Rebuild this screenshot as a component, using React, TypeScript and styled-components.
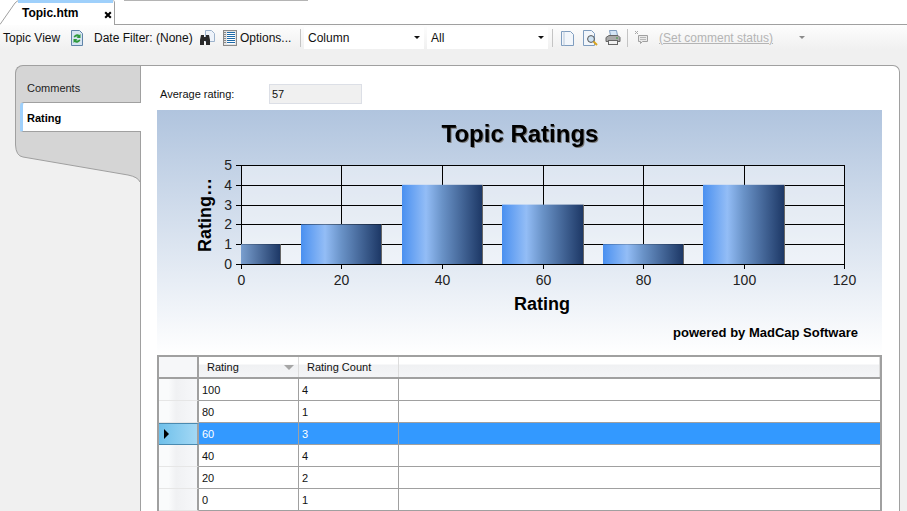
import React from "react";
import styled, { createGlobalStyle } from "styled-components";

const Global = createGlobalStyle`
    html, body {
        margin: 0;
        height: 511px;
        overflow: hidden;
        background: #f0f0f0;
        font-family: "Liberation Sans", Arial, sans-serif;
        font-size: 11px;
        color: #111;
    }
`;

const Page = styled.div`
    width: 907px;
    height: 511px;
    display: flex;
    flex-direction: column;
    overflow: hidden;
`;

const TabStrip = styled.div`
    height: 25px;
    box-sizing: border-box;
    flex: none;
    background: #fff;
    border-bottom: 1px solid #a0a0a0;
    display: flex;
    align-items: flex-start;
`;

const DocTab = styled.div`
    position: relative;
    width: 115px;
    height: 25px;
    box-sizing: border-box;
    display: flex;
    align-items: center;
    justify-content: space-between;
    padding: 0 2px 0 22px;
    font-weight: 700;
    font-size: 12px;
    color: #000;
    background: #fff;
    border-right: 1px solid #a0a0a0;
    border-top-right-radius: 3px;
`;

const TabSlant = styled.svg`
    position: absolute;
    left: 0;
    top: 0;
    width: 115px;
    height: 25px;
`;

const StripEdge = styled.div`
    width: 184px;
    height: 1px;
    margin-left: 9px;
    background: #b4b4b4;
`;

const CloseMark = styled.svg`
    width: 8px;
    height: 8px;
    margin: 5px 0 0 0;
`;

const Toolbar = styled.div`
    height: 25px;
    flex: none;
    box-sizing: border-box;
    display: flex;
    align-items: center;
    padding: 0 0 0 3px;
    font-size: 12px;
    background: linear-gradient(#fdfdfd, #f0f0f0);
`;

const ToolLabel = styled.span<{ $w: number }>`
    width: ${p => p.$w}px;
    white-space: nowrap;
    flex: none;
`;

const ToolIcon = styled.svg<{ $gap?: number }>`
    width: 16px;
    height: 16px;
    flex: none;
    margin-right: ${p => p.$gap ?? 0}px;
`;

const Sep = styled.div<{ $l: number; $r: number }>`
    width: 1px;
    height: 18px;
    background: #c4c4c4;
    margin: 0 ${p => p.$r}px 0 ${p => p.$l}px;
    flex: none;
`;

const Combo = styled.div<{ $w: number }>`
    width: ${p => p.$w}px;
    height: 22px;
    box-sizing: border-box;
    background: #fff;
    margin-right: 3px;
    padding: 0 4px;
    display: flex;
    align-items: center;
    justify-content: space-between;
    flex: none;
`;

const ComboArrow = styled.span<{ $off?: boolean }>`
    width: 0;
    height: 0;
    border-left: 3px solid transparent;
    border-right: 3px solid transparent;
    border-top: 3px solid ${p => (p.$off ? "#8a8a8a" : "#111")};
`;

const StatusLink = styled.span`
    color: #b4b4b4;
    text-decoration: underline;
    width: 140px;
    margin-left: 9px;
    white-space: nowrap;
    flex: none;
`;

const Body = styled.div`
    flex: 1;
    min-height: 0;
    display: flex;
    padding: 15px 7px 0 15px;
`;

const Side = styled.div`
    width: 126px;
    box-sizing: border-box;
    flex: none;
    display: flex;
    flex-direction: column;
    border-right: 1px solid #a0a0a0;
`;

const SideTab = styled.div`
    box-sizing: border-box;
    display: flex;
    align-items: center;
    padding: 8px 0 0 11px;
    color: #222;
    height: 37px;
    background: #d5d5d5;
    border-left: 1px solid #a0a0a0;
    border-top: 1px solid #a0a0a0;
    border-top-left-radius: 8px;
`;

const ActiveSlot = styled.div`
    box-sizing: border-box;
    height: 30px;
    padding-left: 4px;
    background: #d5d5d5;
    border-left: 1px solid #a0a0a0;
    margin-right: -1px;
`;

const ActiveTab = styled.div`
    box-sizing: border-box;
    height: 100%;
    display: flex;
    align-items: center;
    padding: 1px 0 0 4px;
    font-weight: 700;
    color: #000;
    background: #fff;
    border-left: 3px solid #9fd0fb;
    border-top: 1px solid #a0a0a0;
    border-bottom: 1px solid #a0a0a0;
    border-top-left-radius: 4px;
    border-bottom-left-radius: 2px;
`;

const SideTail = styled.svg`
    display: block;
    width: 125px;
    height: 52px;
    flex: none;
`;

const Content = styled.div`
    flex: 1;
    min-width: 0;
    background: #fff;
    border-top: 1px solid #a0a0a0;
    border-right: 1px solid #a0a0a0;
    border-top-right-radius: 7px;
    padding: 18px 16px 0 16px;
    display: flex;
    flex-direction: column;
`;

const RatingRow = styled.div`
    display: flex;
    align-items: center;
    height: 20px;
    margin: 0 0 6px 3px;
`;

const RatingLabel = styled.span`
    width: 109px;
`;

const RatingValue = styled.div`
    width: 93px;
    height: 20px;
    box-sizing: border-box;
    background: #f0f0f0;
    border: 1px solid #dcdfe6;
    padding-left: 2px;
    line-height: 18px;
`;

const ChartBox = styled.svg`
    display: block;
    width: 725px;
    height: 245px;
    flex: none;
    font-family: "Liberation Sans", Arial, sans-serif;
`;

const Grid = styled.div`
    width: 725px;
    box-sizing: border-box;
    border: 2px solid #a0a0a0;
    border-bottom: none;
    flex: none;
`;

const GridRow = styled.div`
    display: grid;
    grid-template-columns: 40px 100px 100px 1fr;
    height: 22px;
`;

const HeadRow = styled(GridRow)`
    background: linear-gradient(#fff 0%, #fff 35%, #f0f1f3 40%, #f4f5f7 100%);
    box-sizing: border-box;
    border-bottom: 2px solid #a0a0a0;
`;

const HeadCell = styled.div<{ $corner?: boolean }>`
    display: flex;
    align-items: center;
    justify-content: space-between;
    padding: 0 2px 0 8px;
    box-sizing: border-box;
    border-right: ${p => (p.$corner ? "2px solid #a0a0a0" : "1px solid #dcdcdc")};
    background: ${p => (p.$corner ? "#f6f7f9" : "transparent")};
`;

const SortArrow = styled.span`
    width: 0;
    height: 0;
    border-left: 5px solid transparent;
    border-right: 5px solid transparent;
    border-top: 5px solid #a6a6a6;
    margin-right: 2px;
`;

const RowHead = styled.div<{ $current?: boolean }>`
    box-sizing: border-box;
    border-right: 2px solid #a0a0a0;
    border-top: ${p => (p.$current ? "1px solid #4a8ab0" : "none")};
    border-bottom: 1px solid ${p => (p.$current ? "#4a8ab0" : "#e6e6e6")};
    display: flex;
    align-items: center;
    padding-left: 5px;
    background: ${p => (p.$current
        ? "linear-gradient(90deg, #6fc0ea, #a3d8f5)"
        : "linear-gradient(90deg, #fafbfc 0, #fafbfc 25%, #f0f1f3 45%, #f7f8fa 100%)")};
`;

const Pointer = styled.span`
    width: 0;
    height: 0;
    border-top: 5px solid transparent;
    border-bottom: 5px solid transparent;
    border-left: 5px solid #000;
`;

const Cell = styled.div<{ $sel?: boolean; $last?: boolean }>`
    box-sizing: border-box;
    display: flex;
    align-items: center;
    padding-left: 3px;
    background: ${p => (p.$sel ? "#3399ff" : "#fff")};
    color: ${p => (p.$sel ? "#fff" : "#111")};
    border-bottom: 1px solid #a0a0a0;
    border-right: ${p => (p.$last ? "none" : "1px solid #a0a0a0")};
`;

const bars = [
    { x: 241, w: 40, v: 1 },
    { x: 301, w: 81, v: 2 },
    { x: 402, w: 81, v: 4 },
    { x: 502, w: 82, v: 3 },
    { x: 603, w: 81, v: 1 },
    { x: 703, w: 82, v: 4 }
];

const yTicks = [
    { v: 0, y: 264 },
    { v: 1, y: 244 },
    { v: 2, y: 224 },
    { v: 3, y: 205 },
    { v: 4, y: 185 },
    { v: 5, y: 165 }
];

const xTicks = [
    { v: 0, x: 241 },
    { v: 20, x: 341 },
    { v: 40, x: 442 },
    { v: 60, x: 543 },
    { v: 80, x: 643 },
    { v: 100, x: 744 },
    { v: 120, x: 844 }
];

const Chart: React.FC = () => (
    <ChartBox viewBox="157 110 725 245">
        <defs>
            <linearGradient id="chartBg" x1="0" y1="0" x2="0" y2="1">
                <stop offset="0" stopColor="#b0c4de" />
                <stop offset="1" stopColor="#ffffff" />
            </linearGradient>
            <linearGradient id="bar" x1="0" y1="0" x2="1" y2="0">
                <stop offset="0" stopColor="#4a90f0" />
                <stop offset="0.3" stopColor="#93bdf6" />
                <stop offset="0.5" stopColor="#6a93c8" />
                <stop offset="1" stopColor="#1d3866" />
            </linearGradient>
            <linearGradient id="barCut" x1="0" y1="0" x2="1" y2="0">
                <stop offset="0" stopColor="#7a9fcf" />
                <stop offset="1" stopColor="#1d3866" />
            </linearGradient>
        </defs>
        <rect x="157" y="110" width="725" height="245" fill="url(#chartBg)" />
        <rect x="241" y="165" width="604" height="99" fill="#ffffff" fillOpacity="0.45" />

        {yTicks.map(t => (
            <g key={t.v}>
                <line x1="236" x2="845" y1={t.y + 0.5} y2={t.y + 0.5} stroke="#000" />
                <text x="232" y={t.y + 5} textAnchor="end" fontSize="14" fill="#222">{t.v}</text>
            </g>
        ))}
        {xTicks.map(t => (
            <g key={t.v}>
                <line x1={t.x + 0.5} x2={t.x + 0.5} y1="165" y2="269" stroke="#000" />
                <text x={t.x + 0.5} y="285" textAnchor="middle" fontSize="14" fill="#222">{t.v}</text>
            </g>
        ))}

        {bars.map((b, i) => (
            <g key={i}>
                <rect
                    x={b.x}
                    y={264 - b.v * 19.8}
                    width={b.w - 1}
                    height={b.v * 19.8}
                    fill={i === 0 ? "url(#barCut)" : "url(#bar)"}
                />
                <line x1={b.x + b.w - 0.5} x2={b.x + b.w - 0.5} y1={264 - b.v * 19.8} y2="264" stroke="#666" />
            </g>
        ))}
        <line x1="241" x2="845" y1="264.5" y2="264.5" stroke="#000" />

        <text x="520" y="142" textAnchor="middle" fontSize="24" fontWeight="700" fill="#000" style={{ filter: "drop-shadow(1.5px 1.5px 0 #777)" }}>Topic Ratings</text>
        <text x="542" y="310" textAnchor="middle" fontSize="18" fontWeight="700" fill="#000">Rating</text>
        <text transform="translate(211 252) rotate(-90)" fontSize="18" fontWeight="700" fill="#000">Rating…</text>
        <text x="858" y="337" textAnchor="end" fontSize="13" fontWeight="700" fill="#000">powered by MadCap Software</text>
    </ChartBox>
);

const rows = [
    ["100", "4"],
    ["80", "1"],
    ["60", "3"],
    ["40", "4"],
    ["20", "2"],
    ["0", "1"]
];

const App: React.FC = () => (
    <Page>
        <Global />
        <TabStrip>
            <DocTab>
                <TabSlant viewBox="0 0 115 25">
                    <path d="M0 24.5L15 3Q17 .5 20 .5" fill="none" stroke="#a0a0a0" />
                    <path d="M18 1.5H113" stroke="#9fd0fb" strokeWidth="3" />
                </TabSlant>
                Topic.htm
                <CloseMark viewBox="0 0 10 10">
                    <path d="M1.5 1.5l7 7M8.5 1.5l-7 7" stroke="#000" strokeWidth="2.6" />
                </CloseMark>
            </DocTab>
            <StripEdge />
        </TabStrip>
        <Toolbar>
            <ToolLabel $w={66}>Topic View</ToolLabel>
            <ToolIcon viewBox="0 0 16 16" $gap={9}>
                <path d="M2.5 .5h8l3 3v12h-11z" fill="#d6e4f2" stroke="#5f84a8" />
                <path d="M4.5 7a4 4 0 0 1 6-2l1-1v4h-4l1.4-1.2a2.4 2.4 0 0 0-3 .6z" fill="#2f9a3c" />
                <path d="M11.5 10a4 4 0 0 1-6 2l-1 1V9h4l-1.4 1.2a2.4 2.4 0 0 0 3-.6z" fill="#2f9a3c" />
            </ToolIcon>
            <ToolLabel $w={106}>Date Filter: (None)</ToolLabel>
            <ToolIcon viewBox="0 0 16 16" $gap={6}>
                <path d="M5.5 .5h6l3 3v8h-9z" fill="#eef3fa" stroke="#9db3cc" />
                <path d="M0 10l1-5h3v2h2V5h3l1 5v5H6v-4H4v4H0z" fill="#2a2a2a" />
            </ToolIcon>
            <ToolIcon viewBox="0 0 16 16" $gap={2}>
                <rect x="1.5" y=".5" width="13" height="15" fill="#e4e4e4" stroke="#8a8a8a" />
                <rect x="5" y="2" width="8" height="12" fill="#fff" />
                <path d="M5 2.5h8M5 4.5h8M5 6.5h8M5 8.5h8M5 10.5h8M5 12.5h8" stroke="#1f6aa8" />
                <path d="M3 2v12" stroke="#8a8a8a" strokeWidth="2" strokeDasharray="1 1" />
            </ToolIcon>
            <ToolLabel $w={60}>Options...</ToolLabel>
            <Sep $l={0} $r={3} />
            <Combo $w={120}>Column<ComboArrow /></Combo>
            <Combo $w={121}>All<ComboArrow /></Combo>
            <Sep $l={1} $r={7} />
            <ToolIcon viewBox="0 0 16 16" $gap={6}>
                <path d="M1.5 1.5h9l3 3v11h-12z" fill="#f2f6fb" stroke="#7f9dbf" />
                <path d="M4 1.5v14" stroke="#b8c8da" />
            </ToolIcon>
            <ToolIcon viewBox="0 0 16 16" $gap={7}>
                <path d="M1.5 .5h8l3 3v12h-11z" fill="#f2f6fb" stroke="#7f9dbf" />
                <circle cx="9" cy="9" r="3.4" fill="#cfe3f3" stroke="#555" />
                <path d="M11.5 11.5l3.5 3.5" stroke="#d9a520" strokeWidth="2" />
            </ToolIcon>
            <ToolIcon viewBox="0 0 16 16">
                <path d="M4.5 .5h7l1 5h-7z" fill="#d4e5f5" stroke="#7f9dbf" />
                <path d="M1 7.5l3-2h9l2 2v4H1z" fill="#a9a9a9" stroke="#666" />
                <rect x="3.5" y="10.5" width="9" height="4" fill="#f0f0f0" stroke="#666" />
                <path d="M11 8h2" stroke="#3b9a3b" />
            </ToolIcon>
            <Sep $l={6} $r={6} />
            <ToolIcon viewBox="0 0 16 16">
                <path d="M1 1l3 3M4 1L1 4" stroke="#a8a8a8" />
                <path d="M4.5 5.5h9v6h-5l-2 2v-2h-2z" fill="#eaeaea" stroke="#a0a0a0" />
                <path d="M6 7.5h6M6 9.5h6" stroke="#b8b8b8" />
            </ToolIcon>
            <StatusLink>(Set comment status)</StatusLink>
            <ComboArrow $off />
        </Toolbar>
        <Body>
            <Side>
                <SideTab>Comments</SideTab>
                <ActiveSlot>
                    <ActiveTab>Rating</ActiveTab>
                </ActiveSlot>
                <SideTail viewBox="0 0 125 52">
                    <path d="M.5 0V13Q1 24 8 25L113 43Q123 45 125 50V0z" fill="#d5d5d5" />
                    <path d="M.5 0V13Q1 24 8 25L113 43Q123 45 125 50" fill="none" stroke="#a0a0a0" />
                </SideTail>
            </Side>
            <Content>
                <RatingRow>
                    <RatingLabel>Average rating:</RatingLabel>
                    <RatingValue>57</RatingValue>
                </RatingRow>
                <Chart />
                <Grid>
                    <HeadRow>
                        <HeadCell $corner />
                        <HeadCell>Rating<SortArrow /></HeadCell>
                        <HeadCell>Rating Count</HeadCell>
                        <HeadCell />
                    </HeadRow>
                    {rows.map(([rating, count], i) => (
                        <GridRow key={rating}>
                            <RowHead $current={i === 2}>{i === 2 && <Pointer />}</RowHead>
                            <Cell $sel={i === 2}>{rating}</Cell>
                            <Cell $sel={i === 2}>{count}</Cell>
                            <Cell $sel={i === 2} $last />
                        </GridRow>
                    ))}
                </Grid>
            </Content>
        </Body>
    </Page>
);

export default App;
